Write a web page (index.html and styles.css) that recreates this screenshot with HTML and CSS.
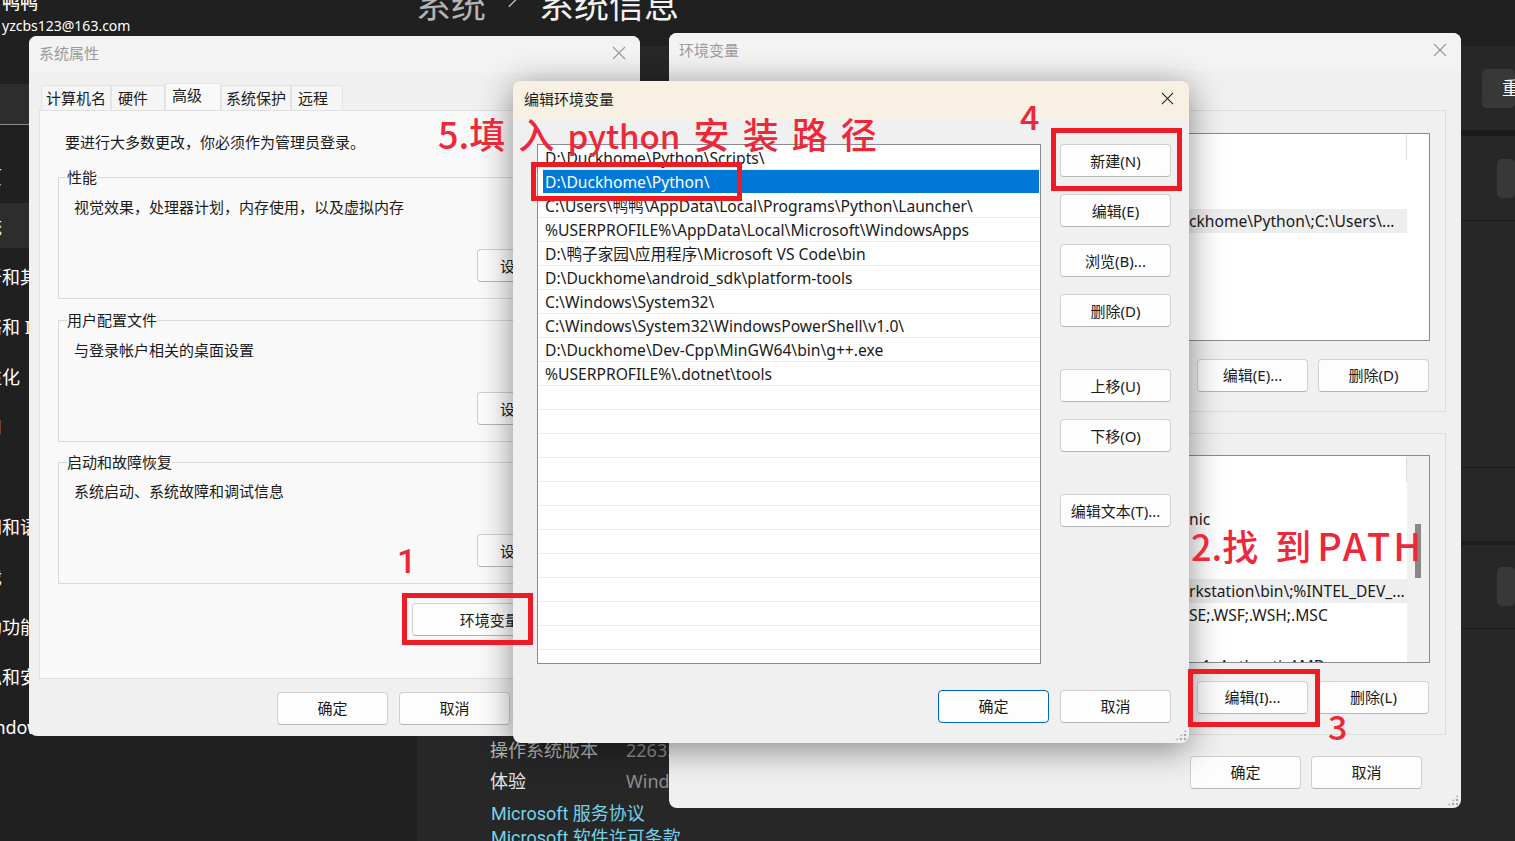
FILE: index.html
```html
<!DOCTYPE html>
<html>
  <head>
    <title>系统信息 - 环境变量</title>
    <meta http-equiv="Content-Type" content="text/html; charset=UTF-8"/>
    <link rel="stylesheet" href="styles.css">
  </head>
  <body>
    <div class="settings">
      <aside class="sidebar">
        <div class="profile">
          <div class="profile-name">鸭鸭</div>
          <div class="profile-mail">yzcbs123@163.com</div>
        </div>
        <div class="search"></div>
        <nav class="nav">
          <div class="nav-item">主页</div>
          <div class="nav-item active">系统</div>
          <div class="nav-item">蓝牙和其他设备</div>
          <div class="nav-item">网络和 Internet</div>
          <div class="nav-item">个性化</div>
          <div class="nav-item">应用</div>
          <div class="nav-item">帐户</div>
          <div class="nav-item">时间和语言</div>
          <div class="nav-item">游戏</div>
          <div class="nav-item">辅助功能</div>
          <div class="nav-item">隐私和安全性</div>
          <div class="nav-item win-update">Windows 更新</div>
        </nav>
      </aside>
      <main class="content">
        <h1 class="crumb">
          <span class="crumb-parent">系统</span>
          <svg class="crumb-sep" viewBox="0 0 12 20"><path d="M2 1l9 9-9 9"/></svg>
          <span>系统信息</span>
        </h1>
        <div class="panel">
          <div class="card card-first"><span class="dark-btn btn-rename">重命名</span></div>
          <div class="card card-second"><span class="dark-btn btn-copy">复制</span></div>
          <div class="spec">
            <div class="spec-row"><span class="spec-key">操作系统版本</span><span class="spec-val">22635</span></div>
            <div class="spec-row"><span class="spec-key spec-key-on">体验</span><span class="spec-val">Windows</span></div>
            <a class="spec-link spec-link-first">Microsoft 服务协议</a>
            <a class="spec-link">Microsoft 软件许可条款</a>
          </div>
          <div class="side-lines">
            <div class="side-line side-line-a"></div>
            <div class="side-line side-line-b"></div>
            <div class="side-line side-line-c"><span class="dark-btn btn-side"></span></div>
          </div>
        </div>
      </main>
    </div>

    <!-- 系统属性 -->
    <section class="window win-sys">
      <header class="titlebar">
        <span class="title-text">系统属性</span>
        <svg class="close" viewBox="0 0 14 14"><path d="M1 1l12 12M13 1L1 13"/></svg>
      </header>
      <div class="tabs">
        <span class="tab tab-a">计算机名</span>
        <span class="tab tab-b">硬件</span>
        <span class="tab tab-c">高级</span>
        <span class="tab tab-d">系统保护</span>
        <span class="tab tab-e">远程</span>
      </div>
      <div class="sheet">
        <p class="sheet-note">要进行大多数更改，你必须作为管理员登录。</p>
        <fieldset class="group">
          <legend>性能</legend>
          <p>视觉效果，处理器计划，内存使用，以及虚拟内存</p>
          <button class="btn btn-set">设置(S)...</button>
        </fieldset>
        <fieldset class="group">
          <legend>用户配置文件</legend>
          <p>与登录帐户相关的桌面设置</p>
          <button class="btn btn-set">设置(E)...</button>
        </fieldset>
        <fieldset class="group group-last">
          <legend>启动和故障恢复</legend>
          <p>系统启动、系统故障和调试信息</p>
          <button class="btn btn-set">设置(T)...</button>
        </fieldset>
        <button class="btn btn-env">环境变量(N)...</button>
      </div>
      <footer class="sys-footer">
        <button class="btn">确定</button>
        <button class="btn">取消</button>
      </footer>
    </section>

    <!-- 环境变量 -->
    <section class="window win-env">
      <header class="titlebar">
        <span class="title-text">环境变量</span>
        <svg class="close" viewBox="0 0 14 14"><path d="M1 1l12 12M13 1L1 13"/></svg>
      </header>
      <div class="env-body">
        <div class="env-group">
          <div class="env-list">
            <div class="env-row env-row-user selected-gray">ckhome\Python\;C:\Users\...</div>
            <span class="list-rule"></span>
          </div>
          <div class="env-actions">
            <button class="btn">编辑(E)...</button>
            <button class="btn">删除(D)</button>
          </div>
        </div>
        <div class="env-group env-group-system">
          <div class="env-list">
            <span class="list-track"></span>
            <div class="env-row env-row-nic">nic</div>
            <div class="env-row env-row-path selected-gray">rkstation\bin\;%INTEL_DEV_...</div>
            <div class="env-row env-row-ext">SE;.WSF;.WSH;.MSC</div>
            <div class="env-row env-row-cpu">1, AuthenticAMD</div>
            <span class="list-rule"></span>
            <span class="list-thumb"></span>
          </div>
          <div class="env-actions">
            <button class="btn">编辑(I)...</button>
            <button class="btn">删除(L)</button>
          </div>
        </div>
        <footer class="env-footer">
          <button class="btn">确定</button>
          <button class="btn">取消</button>
        </footer>
      </div>
      <span class="grip"></span>
    </section>

    <!-- 编辑环境变量 -->
    <section class="window win-edit">
      <header class="titlebar edit-title">
        <span class="title-text">编辑环境变量</span>
        <svg class="close" viewBox="0 0 14 14"><path d="M1 1l12 12M13 1L1 13"/></svg>
      </header>
      <div class="edit-body">
        <div class="path-list">
          <div class="path-row">D:\Duckhome\Python\Scripts\</div>
          <div class="path-row selected">D:\Duckhome\Python\</div>
          <div class="path-row">C:\Users\鸭鸭\AppData\Local\Programs\Python\Launcher\</div>
          <div class="path-row">%USERPROFILE%\AppData\Local\Microsoft\WindowsApps</div>
          <div class="path-row">D:\鸭子家园\应用程序\Microsoft VS Code\bin</div>
          <div class="path-row">D:\Duckhome\android_sdk\platform-tools</div>
          <div class="path-row">C:\Windows\System32\</div>
          <div class="path-row">C:\Windows\System32\WindowsPowerShell\v1.0\</div>
          <div class="path-row">D:\Duckhome\Dev-Cpp\MinGW64\bin\g++.exe</div>
          <div class="path-row">%USERPROFILE%\.dotnet\tools</div>
          <div class="path-row"></div><div class="path-row"></div><div class="path-row"></div>
          <div class="path-row"></div><div class="path-row"></div><div class="path-row"></div>
          <div class="path-row"></div><div class="path-row"></div><div class="path-row"></div>
          <div class="path-row"></div><div class="path-row"></div>
        </div>
        <div class="edit-actions">
          <button class="btn">新建(N)</button>
          <button class="btn">编辑(E)</button>
          <button class="btn">浏览(B)...</button>
          <button class="btn">删除(D)</button>
          <button class="btn gap-top">上移(U)</button>
          <button class="btn">下移(O)</button>
          <button class="btn gap-top">编辑文本(T)...</button>
        </div>
      </div>
      <footer class="edit-footer">
        <button class="btn btn-primary">确定</button>
        <button class="btn">取消</button>
      </footer>
      <span class="grip"></span>
    </section>

    <!-- 红色标注 -->
    <div class="mark box-env"></div>
    <div class="mark box-path"></div>
    <div class="mark box-new"></div>
    <div class="mark box-edit"></div>
    <div class="note note-1">1</div>
    <div class="note note-2">2.找 到<span class="note-path">PATH</span></div>
    <div class="note note-3">3</div>
    <div class="note note-4">4</div>
    <div class="note note-5">5.填 入 <span class="note-python">python</span> 安 装 路 径</div>
  </body>
</html>
```

FILE: styles.css
```css
html, body {
  margin: 0;
  height: 100%;
  overflow: hidden;
}
body {
  position: relative;
  background: #202020;
  color: #1a1a1a;
  font-family: 'Noto Sans', 'Noto Sans CJK SC', sans-serif;
  font-size: 15px;
}
p {
  margin: 0;
}

/* settings app behind the dialogs */
.settings {
  display: flex;
  height: 841px;
  color: #fff;
}
.sidebar {
  width: 417px;
  flex: none;
  overflow: hidden;
}
.profile-name {
  margin: -10px 0 0 2px;
  font-size: 18px;
  font-weight: 500;
  line-height: 24px;
}
.profile-mail {
  margin: 0 0 0 2px;
  font-size: 14px;
  line-height: 24px;
  height: 24px;
}
.search {
  height: 40px;
  margin-top: 46px;
  background: #2d2d2d;
  border-bottom: 1px solid #8a8a8a;
}
.nav {
  margin-top: 27px;
}
.nav-item {
  height: 50px;
  line-height: 50px;
  margin-left: -34px;
  font-size: 18px;
  white-space: nowrap;
}
.nav-item.active {
  height: 45px;
  margin: 1px 0 4px -34px;
  line-height: 48px;
  background: #2d2d2d;
}
.win-update {
  margin-left: -27px;
}
.content {
  flex: 1;
  position: relative;
}
.crumb {
  margin: -41px 0 0 -1px;
  height: 87px;
  display: flex;
  gap: 20px;
  align-items: center;
  font-size: 35px;
  font-weight: 400;
  color: #f2f2f2;
}
.crumb-parent {
  color: #b4b4b4;
}
.crumb-sep {
  width: 11px;
  height: 19px;
  margin: -8px 1px 0;
  fill: none;
  stroke: #b4b4b4;
  stroke-width: 1.6;
}
.panel {
  position: relative;
  background: #272727;
  height: 795px;
}
.card {
  display: flex;
  justify-content: flex-end;
  align-items: center;
  height: 84px;
  border-bottom: 1px solid #1d1d1d;
}
.card-first {
  border-bottom: 6px solid #1c1c1c;
}
.dark-btn {
  background: #383838;
  border-radius: 5px;
  height: 39px;
  line-height: 39px;
  box-sizing: border-box;
  overflow: hidden;
  white-space: nowrap;
  font-size: 18px;
}
.btn-rename {
  width: 33px;
  padding-left: 20px;
}
.btn-copy {
  width: 18px;
  color: transparent;
}
.side-lines {
  position: absolute;
  left: 1044px;
  right: 0;
  top: 421px;
}
.side-line {
  display: flex;
  justify-content: flex-end;
  align-items: center;
  box-sizing: border-box;
}
.side-line-a {
  height: 1px;
  background: #1d1d1d;
}
.side-line-b {
  height: 77px;
  border-bottom: 4px solid #1c1c1c;
}
.side-line-c {
  height: 84px;
  border-bottom: 1px solid #1d1d1d;
}
.btn-side {
  width: 18px;
}
.spec {
  padding: 514px 0 0 73px;
  font-size: 18px;
}
.spec-row {
  display: flex;
  height: 31px;
  line-height: 31px;
}
.spec-key {
  width: 136px;
  color: #b9b9b9;
}
.spec-key-on {
  color: #e6e6e6;
}
.spec-val {
  color: #8f8f8f;
}
.spec-link {
  display: block;
  margin-left: 1px;
  color: #76d2e8;
  font-family: Roboto, 'Noto Sans CJK SC', sans-serif;
  height: 24px;
  line-height: 24px;
}
.spec-link-first {
  margin-top: 5px;
}

/* dialog windows, placed like on a desktop */
.window {
  position: absolute;
  box-sizing: border-box;
  background: #f0f0f0;
  border-radius: 8px;
  overflow: hidden;
}
.win-sys {
  left: 29px;
  top: 36px;
  width: 611px;
  height: 700px;
}
.win-env {
  left: 669px;
  top: 33px;
  width: 792px;
  height: 775px;
}
.win-edit {
  left: 513px;
  top: 81px;
  width: 676px;
  height: 662px;
  box-shadow: 0 6px 34px rgba(0, 0, 0, 0.45);
}
.titlebar {
  box-sizing: border-box;
  height: 37px;
  background: #f3f3f3;
  display: flex;
  align-items: center;
  justify-content: space-between;
  padding: 0 14px 4px 10px;
}
.title-text {
  color: #9b9b9b;
  font-size: 15px;
}
.close {
  width: 14px;
  height: 14px;
  fill: none;
  stroke: #9a9a9a;
  stroke-width: 1.1;
}
.edit-title {
  height: 38px;
  background: #f8f1e3;
  padding: 0 15px 3px 11px;
}
.edit-title .title-text {
  color: #1a1a1a;
}
.edit-title .close {
  stroke: #1a1a1a;
  width: 13px;
  height: 13px;
}
.btn {
  display: block;
  box-sizing: border-box;
  width: 111px;
  height: 33px;
  padding: 0;
  background: #fdfdfd;
  border: 1px solid #d0d0d0;
  border-bottom-color: #b5b5b5;
  border-radius: 4px;
  color: #1a1a1a;
  font-family: inherit;
  font-size: 15px;
}
.sys-footer .btn,
.env-footer .btn,
.env-actions .btn,
.edit-footer .btn {
  padding-bottom: 2px;
}
.btn-primary {
  border-color: #0067c0;
}

/* 系统属性 */
.tabs {
  display: flex;
  align-items: flex-end;
  height: 37px;
  padding-left: 12px;
  box-sizing: border-box;
}
.tab {
  box-sizing: border-box;
  height: 25px;
  line-height: 24px;
  background: #f5f5f5;
  border: 1px solid #e3e3e3;
  border-bottom: 0;
  padding-left: 4px;
}
.tab-a { width: 70px; }
.tab-b { width: 54px; padding-left: 6px; }
.tab-c { width: 56px; height: 27px; line-height: 22px; padding-left: 6px; background: #f9f9f9; }
.tab-d { width: 70px; }
.tab-e { width: 52px; padding-left: 6px; }
.sheet {
  margin: 0 14px 0 10px;
  height: 569px;
  box-sizing: border-box;
  background: #f9f9f9;
  border: 1px solid #e0e0e0;
  padding: 20px 18px 0;
}
.sheet-note {
  margin: 0 0 14px 7px;
  line-height: 22px;
  height: 22px;
}
.group {
  position: relative;
  box-sizing: border-box;
  height: 132px;
  margin: 0 0 11px;
  padding: 9px 0 0 15px;
  border: 1px solid #d9d9d9;
  min-inline-size: auto;
}
.group-last {
  margin-top: -1px;
  padding-top: 8px;
}
.group legend {
  padding: 0;
  margin-left: -7px;
  line-height: 20px;
}
.btn-set {
  position: absolute;
  right: 29px;
  bottom: 16px;
  width: 100px;
  text-align: left;
  padding-left: 22px;
}
.btn-env {
  width: 188px;
  margin: 19px 0 0 354px;
}
.sys-footer {
  display: flex;
  gap: 11px;
  padding: 13px 0 0 248px;
}

/* 环境变量 */
.env-body {
  padding: 0 15px 0 15px;
}
.env-group {
  box-sizing: border-box;
  height: 302px;
  margin-top: 40px;
  padding: 22px 15px 0;
  border: 1px solid #dcdcdc;
}
.env-group-system {
  margin-top: 21px;
  padding-top: 21px;
}
.env-list {
  position: relative;
  box-sizing: border-box;
  height: 208px;
  background: #fff;
  border: 1px solid #8a8a95;
  overflow: hidden;
}
.env-row {
  position: relative;
  box-sizing: border-box;
  width: 706px;
  height: 24px;
  line-height: 24px;
  padding-left: 488px;
  white-space: nowrap;
  font-size: 15.6px;
}
.selected-gray {
  background: #eee;
}
.env-row-user { margin-top: 75px; }
.env-row-nic { margin-top: 51px; }
.env-row-path { margin-top: 48px; }
.env-row-cpu { margin-top: 27px; padding-left: 501px; }
.list-rule {
  position: absolute;
  top: 1px;
  left: 705px;
  width: 1px;
  height: 25px;
  background: #ddd;
}
.list-track {
  position: absolute;
  top: 0;
  bottom: 0;
  left: 706px;
  right: 0;
  background: #f0f0f0;
}
.list-thumb {
  position: absolute;
  top: 68px;
  left: 714px;
  width: 6px;
  height: 54px;
  background: #888;
}
.env-actions {
  display: flex;
  justify-content: flex-end;
  gap: 10px;
  margin: 18px 0 0;
  padding-right: 1px;
}
.env-footer {
  display: flex;
  justify-content: flex-end;
  gap: 10px;
  margin-top: 21px;
  padding-right: 24px;
}
.grip {
  position: absolute;
  right: 2px;
  bottom: 2px;
  width: 12px;
  height: 12px;
  background: radial-gradient(circle, #a8a8a8 1.4px, transparent 1.6px) 0 0 / 4px 4px;
  clip-path: polygon(100% 0, 100% 100%, 0 100%);
}

/* 编辑环境变量 */
.edit-body {
  display: flex;
  justify-content: space-between;
  padding: 25px 18px 0 24px;
}
.path-list {
  box-sizing: border-box;
  width: 504px;
  height: 520px;
  background: #fff;
  border: 1px solid #8a8a95;
  padding: 1px 1px 0;
}
.path-row {
  box-sizing: border-box;
  height: 24px;
  line-height: 25px;
  padding-left: 6px;
  border-bottom: 1px solid #ececec;
  white-space: nowrap;
  font-size: 15.65px;
}
.path-row.selected {
  margin-left: 4px;
  padding-left: 2px;
  background: #0078d7;
  border-bottom-color: #fff;
  color: #fff;
}
.edit-actions {
  display: flex;
  flex-direction: column;
  gap: 17px;
}
.edit-actions .gap-top {
  margin-top: 25px;
}
.edit-footer {
  display: flex;
  justify-content: flex-end;
  gap: 11px;
  padding: 26px 18px 0 0;
}

/* red marks drawn over the screenshot */
.mark {
  position: absolute;
  box-sizing: border-box;
  border: 5px solid #ed1c24;
}
.box-env { left: 402px; top: 593px; width: 131px; height: 52px; }
.box-path { left: 531px; top: 162px; width: 211px; height: 39px; }
.box-new { left: 1051px; top: 128px; width: 131px; height: 63px; }
.box-edit { left: 1188px; top: 669px; width: 132px; height: 58px; }
.note {
  position: absolute;
  color: #ed2939;
  font-family: 'Noto Sans CJK SC', sans-serif;
  font-weight: 500;
  white-space: nowrap;
}
.note-1 { left: 397px; top: 539px; font-family: Roboto, sans-serif; font-size: 34px; line-height: 44px; }
.note-2 { left: 1191px; top: 519px; font-size: 36px; line-height: 52px; word-spacing: 9px; }
.note-path { font-size: 38px; letter-spacing: 3px; margin-left: 6px; }
.note-3 { left: 1328px; top: 703px; font-size: 34px; line-height: 46px; }
.note-4 { left: 1020px; top: 93px; font-size: 34px; line-height: 46px; }
.note-5 { left: 438px; top: 109px; font-size: 36px; line-height: 48px; word-spacing: 5px; }
.note-python { font-size: 33px; }
```
